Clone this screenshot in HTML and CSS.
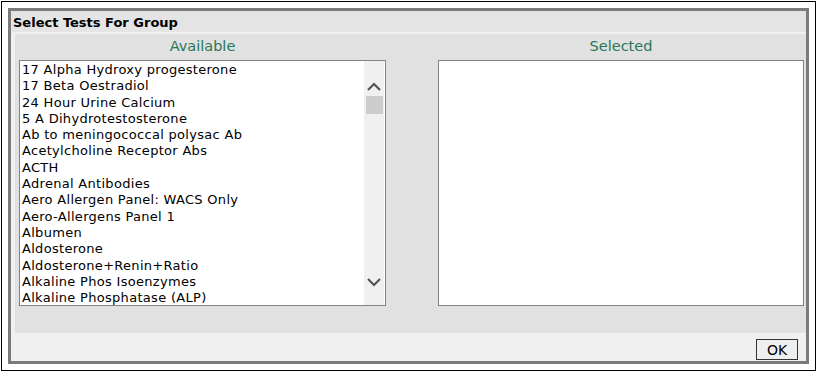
FILE: index.html
```html
<!DOCTYPE html>
<html lang="en">
<head>
    <meta charset="UTF-8">
    <title>Select Tests For Group</title>
    <link rel="stylesheet" href="styles.css">
</head>
<body>
    <div class="outer">
        <div class="dialog">
            <div class="dialog-title">Select Tests For Group</div>

            <div class="picker">
                <div class="picker-col">
                    <div class="picker-head">Available</div>
                    <div class="listbox">
                        <div class="list-items">
                            <div class="item">17 Alpha Hydroxy progesterone</div>
                            <div class="item">17 Beta Oestradiol</div>
                            <div class="item">24 Hour Urine Calcium</div>
                            <div class="item">5 A Dihydrotestosterone</div>
                            <div class="item">Ab to meningococcal polysac Ab</div>
                            <div class="item">Acetylcholine Receptor Abs</div>
                            <div class="item">ACTH</div>
                            <div class="item">Adrenal Antibodies</div>
                            <div class="item">Aero Allergen Panel: WACS Only</div>
                            <div class="item">Aero-Allergens Panel 1</div>
                            <div class="item">Albumen</div>
                            <div class="item">Aldosterone</div>
                            <div class="item">Aldosterone+Renin+Ratio</div>
                            <div class="item">Alkaline Phos Isoenzymes</div>
                            <div class="item">Alkaline Phosphatase (ALP)</div>
                        </div>
                        <div class="scrollbar">
                            <svg class="arrow" width="18" height="12" viewBox="0 0 18 12">
                                <path d="M3 9 L9 3 L15 9" fill="none" stroke="#555" stroke-width="2.2"/>
                            </svg>
                            <div class="thumb"></div>
                            <div class="track"></div>
                            <svg class="arrow" width="18" height="12" viewBox="0 0 18 12">
                                <path d="M3 3 L9 9 L15 3" fill="none" stroke="#555" stroke-width="2.2"/>
                            </svg>
                        </div>
                    </div>
                </div>

                <div class="picker-col">
                    <div class="picker-head">Selected</div>
                    <div class="listbox"></div>
                </div>
            </div>

            <div class="dialog-foot">
                <button class="btn-ok">OK</button>
            </div>
        </div>
    </div>
</body>
</html>
```

FILE: styles.css
```css
body {
    margin: 0;
    background: #fff;
    font-family: 'DejaVu Sans', Verdana, sans-serif;
    color: #000;
}

.outer {
    width: 801px;
    height: 356px;
    margin: 1px 0 0 1px;
    padding: 6px;
    border: 1px solid #000;
    background: #fff;
}

.dialog {
    height: 350px;
    border: 3px solid #7b7b7b;
    background: #f0f0f0;
    display: flex;
    flex-direction: column;
}

.dialog-title {
    height: 21px;
    line-height: 23px;
    padding-left: 2px;
    background: #e4e4e4;
    font-size: 13px;
    font-weight: bold;
}

.picker {
    margin: 2px 0 0 4px;
    padding: 0 2px 27px 4px;
    background: #e1e1e1;
    display: grid;
    grid-template-columns: 367px 366px;
    column-gap: 52px;
}

.picker-head {
    line-height: 24px;
    margin-bottom: 2px;
    text-align: center;
    font-size: 14.5px;
    color: #2a7758;
}

.listbox {
    height: 244px;
    border: 1px solid #828282;
    background: #fff;
    display: flex;
    overflow: hidden;
}

.list-items {
    flex: 1;
    padding: 1px 0 0 2px;
}

.item {
    font-size: 13px;
    letter-spacing: 0.3px;
    line-height: 16.3px;
    white-space: nowrap;
}

.scrollbar {
    width: 20px;
    margin-right: 1px;
    background: #f0f0f0;
    display: flex;
    flex-direction: column;
    align-items: center;
}

.arrow {
    margin: 20px 0 3px;
}

.scrollbar .arrow:last-child {
    margin: 0 0 17px;
}

.thumb {
    width: 17px;
    height: 18px;
    background: #cdcdcd;
}

.track {
    flex: 1;
}

.dialog-foot {
    flex: 1;
    display: flex;
    justify-content: flex-end;
    align-items: flex-end;
    padding: 0 8px 1px 0;
}

.btn-ok {
    width: 42px;
    height: 21px;
    padding: 0;
    border: 1px solid #333;
    background: #efefef;
    font-family: 'DejaVu Sans', Verdana, sans-serif;
    font-size: 14px;
    color: #000;
}
```
